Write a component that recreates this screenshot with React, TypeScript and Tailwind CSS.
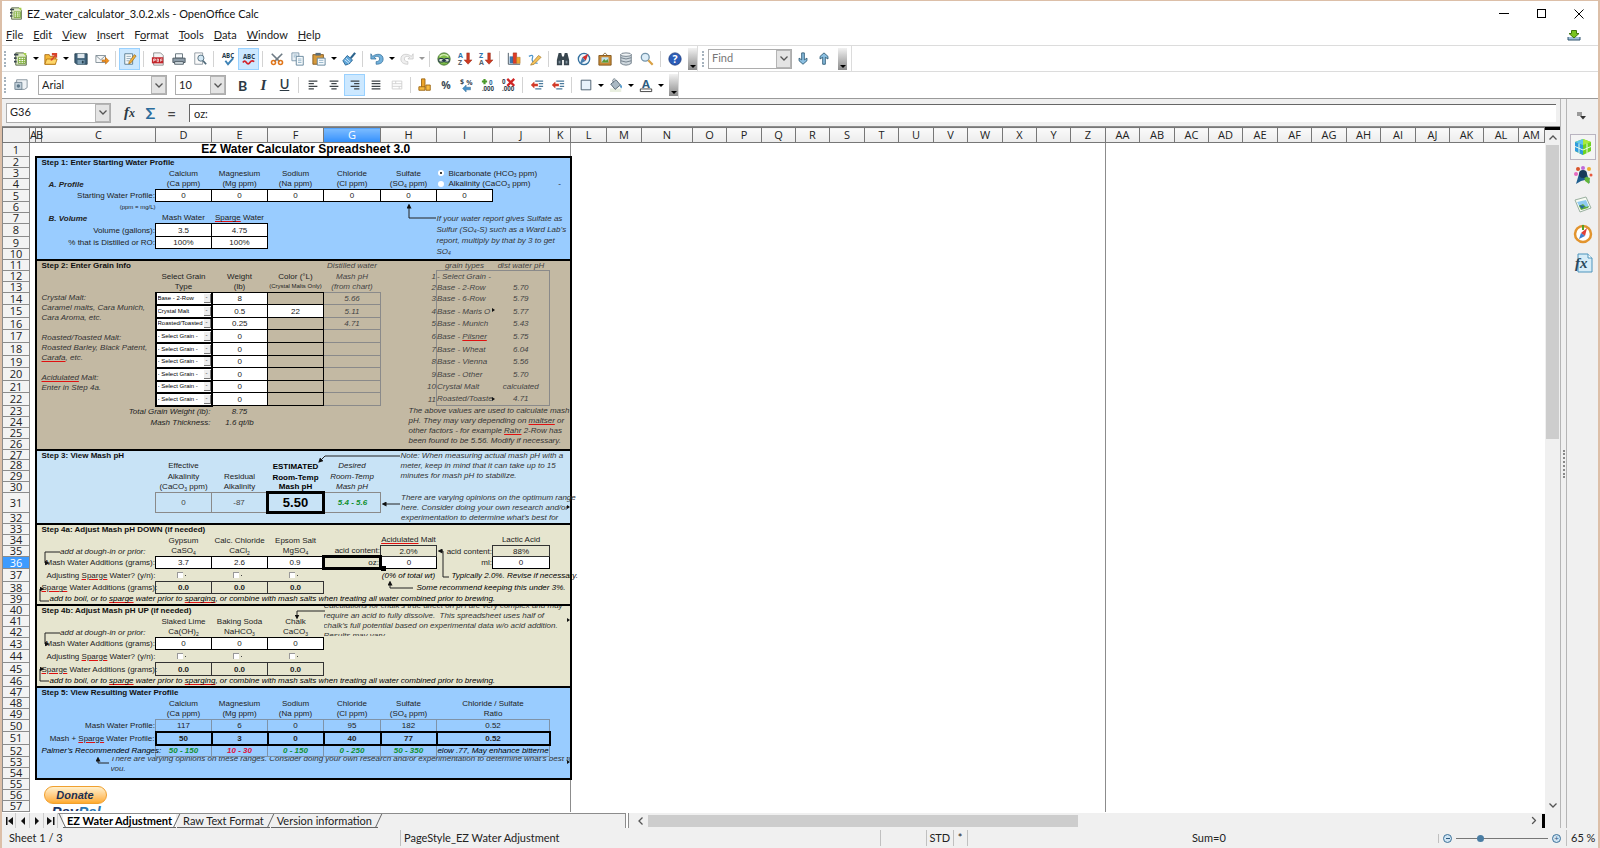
import type { ReactNode } from 'react';
import { clsx } from 'clsx';

/* ------------------------------------------------------------------ */
/* Toolbar icons                                                       */
/* ------------------------------------------------------------------ */

const ICONS: Record<string, ReactNode> = {
  calc: (
    <>
      <path d="M2 1h9l3 3v11H2z" fill="#dfeac6" stroke="#4c5d3a" />
      <path d="M0 2h5v2H0zM0 6h3v2H0zM0 10h3v2H0z" fill="#3a4650" />
      <path d="M5 6h8v7H5z" fill="#fff" stroke="#6c9a2c" />
      <path d="M5 8.500h8M5 11h8M8 6v7M11 6v7" stroke="#7fb135" />
      <path d="M10 1h4v4z" fill="#a5cf4c" />
    </>
  ),
  open: (
    <>
      <path d="M1 3h5l1 2h6v9H1z" fill="#f5b93a" stroke="#a86a12" />
      <path d="M3 8h12l-2 6H1z" fill="#ffd76a" stroke="#b77a18" />
      <path d="M7 9l5-5H9V1h6v6l-2-2-4 5z" fill="#d8432b" />
    </>
  ),
  save: (
    <>
      <path d="M1 2h14v12H3l-2-2z" fill="#3f6079" stroke="#26404f" />
      <path d="M4 2h8v5H4z" fill="#dfe8ee" />
      <path d="M4 9h8v5H4z" fill="#7fa0b5" />
      <path d="M9 10h2v3H9z" fill="#26404f" />
    </>
  ),
  mail: (
    <>
      <path d="M1 4h11v8H1z" fill="#f4f6f7" stroke="#7d8a94" />
      <path d="M1 4l5.500 5L12 4" fill="none" stroke="#7d8a94" />
      <path d="M8 9h4V6l4 4-4 4v-3H8z" fill="#ef8f1e" stroke="#b5630c" strokeWidth=".6" />
    </>
  ),
  edit: (
    <>
      <path d="M2 2h9v12H2z" fill="#f6fafc" stroke="#54768c" />
      <path d="M4 5h5M4 7.500h5M4 10h3" stroke="#8ba5b5" />
      <path d="M7 11l6-8 2 1.500-6 8-2.500 1z" fill="#f3b23a" stroke="#8c5d12" strokeWidth=".7" />
    </>
  ),
  pdf: (
    <>
      <path d="M3 1h8l3 3v11H3z" fill="#f3f3f3" stroke="#888" />
      <path d="M1 6h13v7H1z" fill="#c3252b" />
      <path d="M3 11V8h2v1.500H3M7 8v3h1.500V8zM11 11V8h2M11 9.500h2" fill="none" stroke="#fff" strokeWidth=".8" />
    </>
  ),
  print: (
    <>
      <path d="M4 2h8v5H4z" fill="#f7fafc" stroke="#5c6a74" />
      <path d="M1 7h14v5H1z" fill="#8d9ca8" stroke="#46535d" />
      <path d="M3 11h10v3H3z" fill="#dbe3e8" stroke="#46535d" />
    </>
  ),
  preview: (
    <>
      <path d="M2 1h9v13H2z" fill="#fafafa" stroke="#8c969e" />
      <circle cx="9" cy="7" r="3.500" fill="#d3e8f5" stroke="#4d6878" />
      <path d="M11.500 10l3.500 4" stroke="#4d6878" strokeWidth="2" />
    </>
  ),
  spell: (
    <>
      <text x="8" y="7" fontSize="7" fontWeight="700" textAnchor="middle" fill="#24394a">ABC</text>
      <path d="M5 10l3 4 6-7" fill="none" stroke="#3d82b5" strokeWidth="2.200" />
    </>
  ),
  autospell: (
    <>
      <text x="8" y="8" fontSize="7" fontWeight="700" textAnchor="middle" fill="#24394a">ABC</text>
      <path d="M1 12q2-3 4 0t4 0 5-1" fill="none" stroke="#d3222a" strokeWidth="2" />
    </>
  ),
  cut: (
    <>
      <path d="M2 2l9 9M14 2l-9 9" stroke="#6d7a84" strokeWidth="1.800" />
      <circle cx="4" cy="12" r="2.300" fill="none" stroke="#e0761b" strokeWidth="1.800" />
      <circle cx="12" cy="12" r="2.300" fill="none" stroke="#e0761b" strokeWidth="1.800" />
    </>
  ),
  copy: (
    <>
      <path d="M1 1h8v9H1z" fill="#eaf1f6" stroke="#7a96a9" />
      <path d="M6 5h8v10H6z" fill="#f8fbfd" stroke="#5d7f96" />
      <path d="M3 3.500h4M3 5.500h2M8 8h4M8 10h4M8 12h4" stroke="#8fb0c6" />
    </>
  ),
  paste: (
    <>
      <path d="M1 3h12v11H1z" fill="#d69a3c" stroke="#80551a" />
      <path d="M4 1h6v3H4z" fill="#5b6d79" />
      <path d="M6 7h9v8H6z" fill="#f4f9fc" stroke="#5d7f96" />
      <path d="M8 9.500h5M8 12h5" stroke="#8fb0c6" />
    </>
  ),
  brush: (
    <>
      <path d="M15 1l-5 6" stroke="#2c638c" strokeWidth="2.500" />
      <path d="M6 4l6 5-3 4-5 2-3-5z" fill="#5fa6da" stroke="#28628f" />
      <path d="M3 9l5 4M4.500 7l5 4.500" stroke="#dceefa" />
    </>
  ),
  undo: <path d="M1 2v6h6L5 6c3-2 6-1 6 2 0 2-2 3-4 3v3c5 0 8-2 8-6 0-6-7-7-12-3z" fill="#72b1dc" stroke="#2e6a95" strokeWidth=".8" />,
  redo: <path d="M15 2v6H9l2-2C8 4 5 5 5 8c0 2 2 3 4 3v3c-5 0-8-2-8-6 0-6 7-7 12-3z" fill="#efefef" stroke="#c3c3c3" strokeWidth=".8" />,
  link: (
    <>
      <circle cx="8" cy="8" r="7" fill="#7fbd48" stroke="#3c6b28" />
      <path d="M3 5q5-4 10 0" stroke="#d8efb9" strokeWidth="1.500" fill="none" />
      <rect x="2" y="7.500" width="5.500" height="4" rx="1.500" fill="#dbe8d0" stroke="#23384a" strokeWidth="1.200" />
      <rect x="8.500" y="7.500" width="5.500" height="4" rx="1.500" fill="#dbe8d0" stroke="#23384a" strokeWidth="1.200" />
      <path d="M5.500 9.500h5" stroke="#23384a" strokeWidth="1.400" />
    </>
  ),
  sortAz: (
    <>
      <text x="0" y="7" fontSize="8" fontWeight="700" fill="#2d74ad">A</text>
      <text x="0" y="15" fontSize="8" fontWeight="700" fill="#56636d">Z</text>
      <path d="M10 1h3v8h3l-4.500 5L7 9h3z" fill="#cc3a22" stroke="#8c2413" strokeWidth=".5" />
    </>
  ),
  sortZa: (
    <>
      <text x="0" y="7" fontSize="8" fontWeight="700" fill="#2d74ad">Z</text>
      <text x="0" y="15" fontSize="8" fontWeight="700" fill="#56636d">A</text>
      <path d="M10 1h3v8h3l-4.500 5L7 9h3z" fill="#cc3a22" stroke="#8c2413" strokeWidth=".5" />
    </>
  ),
  chart: (
    <>
      <path d="M1.500 1v13H15" fill="none" stroke="#3b4c58" />
      <path d="M3 5h4v8H3z" fill="#3a77b0" />
      <path d="M7 1h4v12H7z" fill="#df3c24" stroke="#8f2010" strokeWidth=".5" />
      <path d="M11 6h4v7h-4z" fill="#f0a830" stroke="#99641a" strokeWidth=".5" />
    </>
  ),
  pencil: (
    <>
      <path d="M1 5q6-3 4 2t6 6" fill="none" stroke="#4f96cd" strokeWidth="1.500" />
      <path d="M4 13l8-9 3 2-8 8-4 1z" fill="#f4c25a" stroke="#966a1a" strokeWidth=".7" />
    </>
  ),
  binoculars: (
    <>
      <path d="M3 1h3l1 4h2l1-4h3l2 8v6H9V9H7v6H1V9z" fill="#38464f" />
      <path d="M3 10h2v3H3zM11 10h2v3h-2z" fill="#7f909c" />
    </>
  ),
  compass: (
    <>
      <circle cx="8" cy="8" r="6.500" fill="#eef5fa" stroke="#33709f" strokeWidth="1.500" />
      <path d="M13 2L10 10 6 6z" fill="#d22d2d" />
      <path d="M3 14l3-8 4 4z" fill="#4a7fae" />
    </>
  ),
  gallery: (
    <>
      <path d="M5 4l3-3 3 3" fill="none" stroke="#8a6a35" />
      <path d="M1 4h14v11H1z" fill="#c98a36" stroke="#7e5218" />
      <path d="M4 6h8v6H4z" fill="#bfe0ef" />
      <path d="M4 12l3-4 2 2 2-2 1 4z" fill="#5a9a35" />
    </>
  ),
  database: (
    <>
      <path d="M2 3v10q6 4 12 0V3z" fill="#cfd8de" stroke="#6a7883" />
      <ellipse cx="8" cy="3" rx="6" ry="2" fill="#eef2f4" stroke="#6a7883" />
      <path d="M2 6.500q6 3 12 0M2 10q6 3 12 0" fill="none" stroke="#6a7883" />
    </>
  ),
  zoom: (
    <>
      <circle cx="6" cy="6" r="4.500" fill="#dcedf8" stroke="#7494aa" strokeWidth="1.500" />
      <path d="M9.500 9.500l5 5" stroke="#d9a044" strokeWidth="2.500" />
    </>
  ),
  help: (
    <>
      <circle cx="8" cy="8" r="7" fill="#2b5cb8" stroke="#1b3c80" />
      <text x="8" y="12.500" fontSize="12" fontWeight="700" textAnchor="middle" fill="#fff">?</text>
    </>
  ),
  down: <path d="M6.500 1h3v8l3-2v3L8 14 3.500 10V7l3 2z" fill="#8cc0e2" stroke="#2a5873" />,
  up: <path d="M6.500 14h3V6l3 2V5L8 1 3.500 5v3l3-2z" fill="#8cc0e2" stroke="#2a5873" />,
  styles: (
    <>
      <path d="M3 2h12v9l-3 2H3z" fill="#eef2f5" stroke="#7f8d98" />
      <path d="M1 5h8v8H1z" fill="#c2d0da" stroke="#6b7f8e" />
      <circle cx="5" cy="9" r="2" fill="#5e788a" />
    </>
  ),
  alignLeft: <path d="M3 3.500h10M3 6.500h6M3 9.500h10M3 12.500h6" stroke="#3d4347" strokeWidth="1.300" />,
  alignCenter: <path d="M3 3.500h10M5 6.500h6M3 9.500h10M5 12.500h6" stroke="#3d4347" strokeWidth="1.300" />,
  alignRight: <path d="M3 3.500h10M7 6.500h6M3 9.500h10M7 12.500h6" stroke="#3d4347" strokeWidth="1.300" />,
  justify: <path d="M3 3.500h10M3 6.500h10M3 9.500h10M3 12.500h10" stroke="#3d4347" strokeWidth="1.300" />,
  merge: <path d="M2.500 3.500h11v9h-11zM2.500 6.500h11M2.500 9.500h11M6.500 3.500v3M10.500 9.500v3" fill="none" stroke="#cfcfcf" />,
  currency: (
    <>
      <path d="M4 1h4v10H4z" fill="#eda52a" stroke="#9a6410" />
      <path d="M1 10h7v4H1zM9 8h5v6H9z" fill="#f6b93e" stroke="#9a6410" />
    </>
  ),
  percent: <text x="8" y="12" fontSize="12" fontWeight="700" textAnchor="middle" fill="#3b4a55">%</text>,
  standard: (
    <>
      <text x="0" y="7" fontSize="8" fontWeight="700" fill="#3b4a55">$</text>
      <text x="7" y="8" fontSize="8" fontWeight="700" fill="#3b4a55">%</text>
      <path d="M3 12l4-4v2.500h5v3H7V16z" fill="#4590c8" stroke="#28628f" strokeWidth=".5" />
    </>
  ),
  addDecimal: (
    <>
      <path d="M4 1v6M1 4h6" stroke="#4c9a2a" strokeWidth="2.500" />
      <text x="9" y="8" fontSize="7" fontWeight="700" fill="#2f6a9c">0</text>
      <text x="1" y="15" fontSize="7" fontWeight="700" fill="#33424d">.000</text>
    </>
  ),
  delDecimal: (
    <>
      <text x="0" y="7" fontSize="7" fontWeight="700" fill="#33424d">0</text>
      <text x="0" y="15" fontSize="7" fontWeight="700" fill="#33424d">.000</text>
      <path d="M6 1l8 8M14 1l-8 8" stroke="#cf2525" strokeWidth="2.500" />
    </>
  ),
  indent: (
    <>
      <path d="M6 3.500h9M10 6.500h5M10 9.500h5M6 12.500h7" stroke="#4a7a9c" strokeWidth="1.300" />
      <path d="M1 8l4-4v2.500h4v3H5V12z" fill="#d23a28" />
    </>
  ),
  border: <path d="M2.500 2.500h11v11h-11z" fill="#e8f1fa" stroke="#3e5264" />,
  bucket: (
    <>
      <path d="M1 12h13v4H1z" fill="#e9efe0" />
      <path d="M2 7l6-5 5 6-6 5z" fill="#aab9c3" stroke="#50626f" />
      <path d="M13 7q3 2 1 5-2-2-1-5z" fill="#3a8cc8" />
      <path d="M5 5q-2-4 2-4" fill="none" stroke="#50626f" />
    </>
  ),
  fontColor: (
    <>
      <text x="8" y="11" fontSize="13" fontWeight="700" textAnchor="middle" fill="#2c5c80">A</text>
      <path d="M1.500 12.500h13v3h-13z" fill="#fff" stroke="#333" />
    </>
  ),
};

function Icon({ name, size = 16 }: { name: string; size?: number }) {
  return (
    <svg width={size} height={size} viewBox="0 0 16 16" aria-hidden="true" className="shrink-0 overflow-visible font-['Open_Sans',sans-serif]">
      {ICONS[name]}
    </svg>
  );
}

function Tool({ name, label, active = false, children }: { name?: string; label: string; active?: boolean; children?: ReactNode }) {
  return (
    <button
      type="button"
      aria-label={label}
      className={clsx('flex h-[22px] w-[21px] shrink-0 items-center justify-center', active && 'border border-[#99d1ff] bg-[#cce8ff]')}
    >
      {name ? <Icon name={name} size={14} /> : children}
    </button>
  );
}

function Caret({ dim = false }: { dim?: boolean }) {
  return (
    <button type="button" aria-label="More" className="flex h-[22px] w-[9px] shrink-0 items-center justify-center">
      <span className={clsx('border-x-[3px] border-t-[3px] border-x-transparent', dim ? 'border-t-[#999]' : 'border-t-black')} />
    </button>
  );
}

const Sep = () => <span className="mx-[3px] h-4 w-px shrink-0 bg-[#d3d3d3]" />;
const Grip = () => <span className="h-4 w-0 shrink-0 border-l-2 border-dotted border-[#a5b2bd]" />;

function Overflow() {
  return (
    <button type="button" aria-label="Toolbar options" className="flex h-[22px] w-[9px] shrink-0 items-end justify-center bg-linear-to-b from-[#f2f2f2] to-[#8c8c8c] pb-[2px]">
      <span className="border-x-[3px] border-t-[3px] border-x-transparent border-t-black" />
    </button>
  );
}

function Chevron() {
  return (
    <svg width="8" height="5" viewBox="0 0 8 5" aria-hidden="true">
      <path d="M.5.5L4 4 7.500.5" fill="none" stroke="#555" strokeWidth="1.300" />
    </svg>
  );
}

function Combo({ label, value, className, placeholder }: { label: string; value?: string; placeholder?: string; className: string }) {
  return (
    <div className={clsx('flex h-5 shrink-0 border border-[#adadad] bg-white', className)}>
      <input aria-label={label} defaultValue={value} placeholder={placeholder} className="w-0 min-w-0 flex-1 px-[3px] text-[11px] text-[#222] outline-none placeholder:text-[#777]" />
      <button type="button" aria-label={`${label} list`} className="flex w-[15px] items-center justify-center border border-[#b5b5b5] bg-[#e4e4e4]">
        <Chevron />
      </button>
    </div>
  );
}

/* ------------------------------------------------------------------ */
/* Sheet data                                                          */
/* ------------------------------------------------------------------ */

const LETTERS = 'ABCDEFGHIJK'.split('');

const COLUMNS: [string, number][] = [
  ['A', 6], ['B', 6], ['C', 114], ['D', 56], ['E', 56], ['F', 56], ['G', 57], ['H', 56], ['I', 56], ['J', 57], ['K', 21],
  ['L', 36], ['M', 35], ['N', 51], ['O', 34], ['P', 35], ['Q', 34], ['R', 34], ['S', 35], ['T', 34], ['U', 35], ['V', 34],
  ['W', 35], ['X', 34], ['Y', 34], ['Z', 35], ['AA', 34], ['AB', 35], ['AC', 34], ['AD', 34], ['AE', 35], ['AF', 34],
  ['AG', 35], ['AH', 34], ['AI', 35], ['AJ', 34], ['AK', 34], ['AL', 35],
];

const ROW_HEIGHTS = [
  14, 11, 11, 11, 12, 11, 11, 13, 12, 11, 11, 11, 11, 12, 13, 12, 13, 13, 12, 13, 12, 13, 11, 11, 11, 11, 10, 11, 11, 11,
  20, 11, 11, 11, 11, 12, 13, 12, 11, 11, 11, 11, 12, 13, 13, 11, 11, 11, 11, 12, 13, 12, 11, 11, 11, 11, 11,
];

const SECTIONS = [
  { from: 2, to: 10, bg: 'bg-[#99ccff]' },
  { from: 11, to: 26, bg: 'bg-[#c3b9a3]' },
  { from: 27, to: 32, bg: 'bg-[#c8e3f6]' },
  { from: 33, to: 39, bg: 'bg-[#e6e5cf]' },
  { from: 40, to: 46, bg: 'bg-[#e6e5cf]' },
  { from: 47, to: 54, bg: 'bg-[#99ccff]' },
];

interface CellData {
  text: ReactNode;
  className?: string;
  cols?: number;
  rows?: number;
}

const LEFT = 'text-left';
const RIGHT = 'text-right';
const HEAD = 'text-left font-bold text-[#111]';
const BOX = 'border border-black bg-white';
const BOX_PLAIN = 'border border-[#333]';
const GRAY_BOX = 'border border-[#8a8a8a] text-[#444]';
const NOTE = 'text-left italic align-top whitespace-pre text-[#333]';

const Typo = ({ children }: { children: ReactNode }) => (
  <span className="underline decoration-[#e01010] decoration-1 underline-offset-1">{children}</span>
);

const cells: Record<string, CellData> = {};

function put(ref: string, text: ReactNode, className = '', cols = 1, rows = 1) {
  cells[ref] = { text, className, cols, rows };
}

function putRow(row: number, from: string, values: ReactNode[], className = '') {
  const start = LETTERS.indexOf(from);
  values.forEach((value, i) => put(`${LETTERS[start + i]}${row}`, value, className));
}

put('C1', 'EZ Water Calculator Spreadsheet 3.0', 'font-bold text-[12px] leading-[12px] text-black', 9);

// Step 1
put('C2', 'Step 1: Enter Starting Water Profile', HEAD);
putRow(3, 'D', ['Calcium', 'Magnesium', 'Sodium', 'Chloride', 'Sulfate']);
putRow(4, 'D', ['(Ca ppm)', '(Mg ppm)', '(Na ppm)', '(Cl ppm)', <>(SO<sub>4</sub> ppm)</>]);
put('I3', <SheetRadio label={<>Bicarbonate (HCO<sub>3</sub> ppm)</>} checked />, LEFT, 2);
put('I4', <SheetRadio label={<>Alkalinity (CaCO<sub>3</sub> ppm)</>} />, LEFT, 2);
put('K4', '-', 'align-top');
put('C4', 'A. Profile', 'text-left font-bold italic pl-[7px]');
put('C5', 'Starting Water Profile:', RIGHT);
putRow(5, 'D', ['0', '0', '0', '0', '0', '0'], BOX);
put('C6', '(ppm = mg/L)', 'text-right text-[6px]');
put('C7', 'B. Volume', 'text-left font-bold italic pl-[7px]');
putRow(7, 'D', ['Mash Water', <><Typo>Sparge</Typo> Water</>]);
put('I7', <>{'If your water report gives Sulfate as\nSulfur (SO'}<sub>4</sub>{'-S) such as a Ward Lab’s\nreport, multiply by that by 3 to get\nSO'}<sub>4</sub></>, clsx(NOTE, 'leading-[11px]'), 3, 4);
put('C8', 'Volume (gallons):', RIGHT);
putRow(8, 'D', ['3.5', '4.75'], BOX);
put('C9', '% that is Distilled or RO:', RIGHT);
putRow(9, 'D', ['100%', '100%'], BOX);

// Step 2
put('C11', 'Step 2: Enter Grain Info', HEAD);
put('G11', 'Distilled water', 'italic text-[#444]');
put('I11', 'grain types', 'italic text-[#444]');
put('J11', 'dist water pH', 'italic text-[#444]');
putRow(12, 'D', ['Select Grain', 'Weight', 'Color (°L)']);
put('G12', 'Mash pH', 'italic text-[#444]');
putRow(13, 'D', ['Type', '(lb)']);
put('F13', '(Crystal Malts Only)', 'text-[6px]');
put('G13', '(from chart)', 'italic text-[#444]');
put(
  'C14',
  <>
    {'Crystal Malt:\nCaramel malts, Cara Munich,\nCara Aroma, etc.\n\nRoasted/Toasted Malt:\nRoasted Barley, Black Patent,\n'}
    <Typo>Carafa</Typo>
    {', etc.\n\n'}
    <Typo>Acidulated</Typo>
    {' Malt:\nEnter in Step 4a.'}
  </>,
  clsx(NOTE, 'leading-[10px]'),
  1,
  9
);

const GRAIN_ROWS = ['Base - 2-Row', 'Crystal Malt', 'Roasted/Toasted', ...Array(6).fill('- Select Grain -')];
const WEIGHTS = ['8', '0.5', '0.25', '0', '0', '0', '0', '0', '0'];
const MASH_PH = ['5.66', '5.11', '4.71', '', '', '', '', '', ''];
GRAIN_ROWS.forEach((grain, i) => {
  const row = 14 + i;
  put(`D${row}`, <GrainSelect value={grain} row={row} />, 'border border-black border-l-2 border-r-2 border-b-2 bg-white');
  put(`E${row}`, WEIGHTS[i], BOX);
  put(`F${row}`, row === 15 ? '22' : '', row === 15 ? BOX : 'border border-black');
  put(`G${row}`, MASH_PH[i], clsx(GRAY_BOX, 'italic'));
});

const GRAIN_TYPES: [ReactNode, string][] = [
  ['- Select Grain -', ''],
  ['Base - 2-Row', '5.70'],
  ['Base - 6-Row', '5.79'],
  ['Base - Maris O', '5.77'],
  ['Base - Munich', '5.43'],
  [<>Base - <Typo>Pilsner</Typo></>, '5.75'],
  ['Base - Wheat', '6.04'],
  ['Base - Vienna', '5.56'],
  ['Base - Other', '5.70'],
  ['Crystal Malt', 'calculated'],
  ['Roasted/Toaste', '4.71'],
];
GRAIN_TYPES.forEach(([name, ph], i) => {
  const row = 12 + i;
  const edge = clsx('border-[#8a8a8a] italic text-[#444]', i === 0 && 'border-t', i === 10 && 'border-b');
  put(`H${row}`, String(i + 1), 'text-right italic text-[#444]');
  put(`I${row}`, name, clsx(edge, 'border-l text-left'));
  put(`J${row}`, ph, clsx(edge, 'border-r'));
});
put('C23', 'Total Grain Weight (lb):', 'text-right italic pr-px', 2);
put('E23', '8.75', 'italic');
put('C24', 'Mash Thickness:', 'text-right italic pr-px', 2);
put('E24', '1.6 qt/lb', 'italic');
put(
  'H23',
  <>
    {'The above values are used to calculate mash\npH. They may vary depending on '}
    <Typo>maltser</Typo>
    {' or\nother factors - for example '}
    <Typo>Rahr</Typo>
    {' 2-Row has\nbeen found to be 5.56. Modify if necessary.'}
  </>,
  clsx(NOTE, 'pl-7 leading-[10px]'),
  4,
  4
);

// Step 3
put('C27', 'Step 3: View Mash pH', HEAD);
put('H27', 'Note: When measuring actual mash pH with a\nmeter, keep in mind that it can take up to 15\nminutes for mash pH to stabilize.', clsx(NOTE, 'pl-5 leading-[10px]'), 4, 4);
put('D28', 'Effective');
put('D29', 'Alkalinity');
put('D30', <>(CaCO<sub>3</sub> ppm)</>);
put('E29', 'Residual');
put('E30', 'Alkalinity');
put('F28', 'ESTIMATED', 'font-bold text-black align-bottom');
put('F29', 'Room-Temp', 'font-bold text-black align-bottom');
put('F30', 'Mash pH', 'font-bold text-black align-bottom');
put('G28', 'Desired', 'italic');
put('G29', 'Room-Temp', 'italic');
put('G30', 'Mash pH', 'italic');
put('D31', '0', GRAY_BOX);
put('E31', '-87', GRAY_BOX);
put('F31', '5.50', 'border-[3px] border-black text-[13px] leading-[14px] font-bold text-black');
put('G31', '5.4 - 5.6', 'border border-[#8a8a8a] font-bold italic text-[#109030]');
put('H31', 'There are varying opinions on the optimum range\nhere. Consider doing your own research and/or\nexperimentation to determine what’s best for', clsx(NOTE, 'pl-5 leading-[10px]'), 4, 2);

// Steps 4a and 4b share the same row pattern
function additions(row: number, formulas: ReactNode[], grams: string[]) {
  put(`C${row}`, 'add at dough-in or prior:', 'text-right italic pr-[10px]');
  putRow(row, 'D', formulas);
  put(`C${row + 1}`, 'Mash Water Additions (grams):', RIGHT);
  putRow(row + 1, 'D', grams, BOX);
  put(`C${row + 2}`, <>Adjusting <Typo>Sparge</Typo> Water? (y/n):</>, RIGHT);
  putRow(row + 2, 'D', ['D', 'E', 'F'].map((col) => <SheetCheck key={col} label={`Adjust sparge water ${col}${row + 2}`} />));
  put(`C${row + 3}`, <><Typo>Sparge</Typo> Water Additions (grams):</>, RIGHT);
  putRow(row + 3, 'D', ['0.0', '0.0', '0.0'], clsx(BOX_PLAIN, 'font-bold'));
  put(
    `C${row + 4}`,
    <>add to boil, or to <Typo>sparge</Typo> water prior to <Typo>sparging</Typo>, or combine with mash salts when treating all water combined prior to brewing.</>,
    'text-left italic pl-2 text-black',
    9
  );
}

put('C33', 'Step 4a: Adjust Mash pH DOWN (if needed)', HEAD);
putRow(34, 'D', ['Gypsum', 'Calc. Chloride', 'Epsom Salt']);
put('H34', <><Typo>Acidulated</Typo> Malt</>);
put('J34', 'Lactic Acid');
additions(35, [<>CaSO<sub>4</sub></>, <>CaCl<sub>2</sub></>, <>MgSO<sub>4</sub></>], ['3.7', '2.6', '0.9']);
put('G35', 'acid content:', RIGHT);
put('H35', '2.0%', BOX_PLAIN);
put('I35', 'acid content:', RIGHT);
put('J35', '88%', BOX_PLAIN);
put('G36', 'oz:', 'border-[3px] border-black text-right');
put('H36', '0', BOX);
put('I36', 'ml:', RIGHT);
put('J36', '0', BOX);
put('H37', '(0% of total wt)', 'italic text-black');
put('I37', 'Typically 2.0%. Revise if necessary.', 'text-left italic pl-[15px] text-black', 3);
put('H38', 'Some recommend keeping this under 3%.', 'text-left italic pl-9 text-black', 4);

put('C40', 'Step 4b: Adjust Mash pH UP (if needed)', HEAD);
putRow(41, 'D', ['Slaked Lime', 'Baking Soda', 'Chalk']);
additions(42, [<>Ca(OH)<sub>2</sub></>, <>NaHCO<sub>3</sub></>, <>CaCO<sub>3</sub></>], ['0', '0', '0']);
put(
  'G40',
  <div className="flex h-[30px] items-center overflow-hidden">
    {'Calculations for chalk’s true affect on pH are very complex and may\nrequire an acid to fully dissolve.  This spreadsheet uses half of\nchalk’s full potential based on experimental data w/o acid addition.\nResults may vary.'}
  </div>,
  clsx(NOTE, 'leading-[10px]'),
  5,
  3
);

// Step 5
put('C47', 'Step 5: View Resulting Water Profile', HEAD);
putRow(48, 'D', ['Calcium', 'Magnesium', 'Sodium', 'Chloride', 'Sulfate']);
put('I48', 'Chloride / Sulfate', '', 2);
putRow(49, 'D', ['(Ca ppm)', '(Mg ppm)', '(Na ppm)', '(Cl ppm)', <>(SO<sub>4</sub> ppm)</>]);
put('I49', 'Ratio', '', 2);
put('C50', 'Mash Water Profile:', RIGHT);
putRow(50, 'D', ['117', '6', '0', '95', '182'], 'border border-[#7f93a8]');
put('I50', '0.52', 'border border-[#7f93a8]', 2);
put('C51', <>Mash + <Typo>Sparge</Typo> Water Profile:</>, RIGHT);
putRow(51, 'D', ['50', '3', '0', '40', '77'], 'border-2 border-black font-bold');
put('I51', '0.52', 'border-2 border-black font-bold', 2);
put('C52', 'Palmer’s Recommended Ranges:', 'text-right italic text-black');
putRow(52, 'D', ['50 - 150', '10 - 30', '0 - 150', '0 - 250', '50 - 350'], 'border border-[#7f93a8] font-bold italic text-[#109030]');
cells.E52.className = 'border border-[#7f93a8] font-bold italic text-[#e01040]';
put('I52', <div className="flex justify-center overflow-hidden">elow .77, May enhance bitterne</div>, 'border border-[#7f93a8] italic text-black', 2);
put(
  'C53',
  <div className="flex h-[14px] items-center overflow-hidden">
    {'There are varying opinions on these ranges. Consider doing your own research and/or experimentation to determine what’s best for\nyou.'}
  </div>,
  clsx(NOTE, 'pl-[69px] leading-[10px]'),
  9,
  2
);
put('C55', <DonateButton />, 'text-left align-top', 3, 3);

function SheetRadio({ label, checked = false }: { label: ReactNode; checked?: boolean }) {
  return (
    <label className="flex h-[9px] items-center gap-[5px] pl-px">
      <input type="radio" name="alkalinity" defaultChecked={checked} className="size-[6px] appearance-none rounded-full border-2 border-white bg-white checked:bg-black" />
      <span>{label}</span>
    </label>
  );
}

function SheetCheck({ label }: { label: string }) {
  return (
    <span className="flex h-[9px] items-center justify-center gap-[2px] pr-1">
      <input type="checkbox" aria-label={label} className="size-[6px] appearance-none border-t border-l border-[#999] bg-white" />
      <span className="size-px bg-[#444]" />
    </span>
  );
}

function GrainSelect({ value, row }: { value: string; row: number }) {
  return (
    <span className="flex h-[9px] items-center">
      <select aria-label={`Grain type, row ${row}`} className="h-[9px] w-0 min-w-0 flex-1 appearance-none pl-px text-[6px] leading-[9px] text-black">
        <option>{value}</option>
      </select>
      <span className="h-[9px] w-[7px] border-r border-b border-[#777] bg-[#eee] text-[6px] leading-[7px]">-</span>
    </span>
  );
}

function DonateButton() {
  return (
    <div className="flex h-[31px] flex-col overflow-hidden pt-[6px]">
      <button
        type="button"
        className="ml-[2px] h-[18px] w-[63px] shrink-0 rounded-full border border-[#f0a030] bg-linear-to-b from-[#fff0cc] to-[#ffab28] text-[11px] leading-[16px] font-bold italic text-[#1c2f50]"
      >
        Donate
      </button>
      <span className="ml-[10px] text-[15px] leading-[15px] font-bold italic text-[#1c3668]">
        Pay<span className="text-[#2a76b4]">Pal</span>
      </span>
    </div>
  );
}

/* ------------------------------------------------------------------ */
/* Sheet                                                               */
/* ------------------------------------------------------------------ */

function covered() {
  const set = new Set<string>();
  Object.entries(cells).forEach(([ref, cell]) => {
    const col = LETTERS.indexOf(ref[0]);
    const row = Number(ref.slice(1));
    for (let r = 0; r < (cell.rows ?? 1); r++) {
      for (let c = 0; c < (cell.cols ?? 1); c++) {
        if (r || c) set.add(`${LETTERS[col + c]}${row + r}`);
      }
    }
  });
  return set;
}

const HIDDEN = covered();

function SheetRow({ row, height }: { row: number; height: number }) {
  const section = SECTIONS.find((s) => row >= s.from && row <= s.to);
  return (
    <tr style={{ height }}>
      <th
        scope="row"
        className={clsx(
          'border border-[#8c8c8c] p-0 text-[11px] leading-[8px] font-normal',
          row === 36 ? 'bg-[#3d9bff] font-bold text-white' : 'bg-[#f3f3f3] text-[#222]'
        )}
      >
        {row}
      </th>
      {LETTERS.map((letter, i) => {
        const ref = `${letter}${row}`;
        if (HIDDEN.has(ref)) return null;
        const cell = cells[ref];
        const last = LETTERS[i + (cell?.cols ?? 1) - 1];
        const boxed = section && letter !== 'A';
        return (
          <td
            key={ref}
            colSpan={cell?.cols ?? 1}
            rowSpan={cell?.rows ?? 1}
            className={clsx(
              'p-0 whitespace-nowrap',
              !cell?.className?.includes('leading-') && 'leading-[9px]',
              !cell?.className?.includes('text-left') && !cell?.className?.includes('text-right') && 'text-center',
              boxed && !cell?.className?.includes('bg-white') && section.bg,
              boxed && row === section.from && 'border-t-2 border-t-black',
              boxed && row + (cell?.rows ?? 1) - 1 === section.to && 'border-b-2 border-b-black',
              boxed && letter === 'B' && 'border-l-2 border-l-black',
              boxed && last === 'K' && 'border-r-2 border-r-black',
              !section && last === 'K' && 'border-r border-r-[#8c8c8c]',
              cell?.className
            )}
          >
            {cell?.text}
          </td>
        );
      })}
      <td colSpan={15} className="border-r border-[#8c8c8c] p-0" />
      <td colSpan={13} className="p-0" />
    </tr>
  );
}

// Arrows that are drawn on top of the cells
const ARROWS = [
  'M434 91H407V79',
  'M398 329H323L318 334',
  'M398 377H382',
  'M58 425H43V436H45',
  'M47 474H38V462H40',
  'M447 450H441V424H438',
  'M411 461H388V456',
  'M323 484H295V490',
  'M58 506H43V517H45',
  'M47 554H38V542H40',
  'M107 636H96V632',
];

function Arrows() {
  return (
    <svg width="600" height="690" viewBox="0 0 600 690" aria-hidden="true" className="pointer-events-none absolute top-0 left-0">
      <defs>
        <marker id="head" viewBox="0 0 6 6" refX="3" refY="3" markerWidth="5" markerHeight="5" orient="auto">
          <path d="M0 0L6 3 0 6z" fill="#111" />
        </marker>
      </defs>
      {ARROWS.map((d) => (
        <path key={d} d={d} fill="none" stroke="#222" markerEnd="url(#head)" />
      ))}
      <path d="M490 181l3 2-3 2zM490 270l3 2-3 2zM565 378l3 2-3 2zM565 491l3 2-3 2zM565 633l3 2-3 2z" fill="#111" />
      <path d="M379 439h5v5h-5z" fill="#000" />
    </svg>
  );
}

function Sheet() {
  return (
    <div className="relative min-h-0 flex-1 overflow-hidden bg-white">
      <table className="w-full table-fixed border-collapse font-['Liberation_Sans',Arial,sans-serif] text-[8px] text-[#222] [&_sub]:text-[5px]">
        <colgroup>
          <col className="w-[27px]" />
          {COLUMNS.map(([name, width]) => (
            <col key={name} style={{ width }} />
          ))}
          <col />
        </colgroup>
        <thead className="font-['Open_Sans',sans-serif]">
          <tr className="h-[15px]">
            <th className="border border-[#777] bg-[#f0f0f0] p-0" />
            {[...COLUMNS.map(([name]) => name), 'AM'].map((name) => (
              <th
                key={name}
                scope="col"
                className={clsx(
                  'border border-[#777] p-0 text-[11px] leading-[12px] font-normal',
                  name === 'G' ? 'bg-linear-to-b from-[#7cbcff] to-[#2f8ffc] text-white' : 'bg-linear-to-b from-[#fafafa] to-[#ececec] text-[#222]'
                )}
              >
                {name}
              </th>
            ))}
          </tr>
        </thead>
        <tbody className="[&_th]:font-['Open_Sans',sans-serif]">
          {ROW_HEIGHTS.map((height, i) => (
            <SheetRow key={i} row={i + 1} height={height} />
          ))}
        </tbody>
      </table>
      <Arrows />
    </div>
  );
}

/* ------------------------------------------------------------------ */
/* Window chrome                                                       */
/* ------------------------------------------------------------------ */

function TitleBar() {
  return (
    <header className="flex h-[25px] shrink-0 items-center pl-2">
      <Icon name="calc" size={13} />
      <h1 className="ml-1 flex-1 text-[11px] leading-4 text-[#111]">EZ_water_calculator_3.0.2.xls - OpenOffice Calc</h1>
      <div className="flex items-center gap-7 pr-[14px]">
        <button type="button" aria-label="Minimize" className="flex size-[10px] items-center">
          <span className="h-px w-full bg-black" />
        </button>
        <button type="button" aria-label="Maximize" className="size-[9px] border border-black" />
        <button type="button" aria-label="Close" className="size-[10px]">
          <svg width="10" height="10" viewBox="0 0 10 10" aria-hidden="true">
            <path d="M.5.5l9 9M9.500.5l-9 9" stroke="#000" />
          </svg>
        </button>
      </div>
    </header>
  );
}

const MENUS: [string, string, string][] = [
  ['', 'F', 'ile'], ['', 'E', 'dit'], ['', 'V', 'iew'], ['', 'I', 'nsert'], ['F', 'o', 'rmat'],
  ['', 'T', 'ools'], ['', 'D', 'ata'], ['', 'W', 'indow'], ['', 'H', 'elp'],
];

function MenuBar() {
  return (
    <nav className="flex h-5 shrink-0 items-center gap-[10px] border-b border-[#dcdcdc] pl-1 text-[11px]">
      {MENUS.map(([before, key, after]) => (
        <button key={key} type="button">
          {before}
          <u>{key}</u>
          {after}
        </button>
      ))}
      <button type="button" aria-label="Update available" className="mr-[17px] ml-auto">
        <svg width="14" height="11" viewBox="0 0 14 11" aria-hidden="true">
          <path d="M1 7v3h12V7" fill="#9fc0d8" stroke="#31556e" />
          <path d="M4.500.5h5v3H12L7 8 2 3.500h2.500z" fill="#78c41e" stroke="#40780c" />
        </svg>
      </button>
    </nav>
  );
}

function Toolbars() {
  return (
    <div className="shrink-0 border-b border-[#9a9a9a] bg-white">
      <div className="flex h-[26px] items-center border-b border-[#dcdcdc] pl-[2px]">
        <Grip />
        <span className="w-1" />
        <Tool name="calc" label="New" />
        <Caret />
        <Tool name="open" label="Open" />
        <Caret />
        <Tool name="save" label="Save" />
        <Tool name="mail" label="E-mail" />
        <Sep />
        <Tool name="edit" label="Edit File" active />
        <Sep />
        <Tool name="pdf" label="Export PDF" />
        <Tool name="print" label="Print" />
        <Tool name="preview" label="Page Preview" />
        <Sep />
        <Tool name="spell" label="Spelling" />
        <Tool name="autospell" label="AutoSpellcheck" active />
        <Sep />
        <Tool name="cut" label="Cut" />
        <Tool name="copy" label="Copy" />
        <Tool name="paste" label="Paste" />
        <Caret />
        <Tool name="brush" label="Format Paintbrush" />
        <Sep />
        <Tool name="undo" label="Undo" />
        <Caret />
        <Tool name="redo" label="Redo" />
        <Caret dim />
        <Sep />
        <Tool name="link" label="Hyperlink" />
        <Tool name="sortAz" label="Sort Ascending" />
        <Tool name="sortZa" label="Sort Descending" />
        <Sep />
        <Tool name="chart" label="Chart" />
        <Tool name="pencil" label="Show Draw Functions" />
        <Sep />
        <Tool name="binoculars" label="Find and Replace" />
        <Tool name="compass" label="Navigator" />
        <Tool name="gallery" label="Gallery" />
        <Tool name="database" label="Data Sources" />
        <Tool name="zoom" label="Zoom" />
        <Sep />
        <Tool name="help" label="Help" />
        <span className="w-[3px]" />
        <Overflow />
        <span className="mr-1 h-full w-px bg-[#dcdcdc]" />
        <Grip />
        <Combo label="Find" placeholder="Find" className="ml-1 w-[84px]" />
        <Tool name="down" label="Find Next" />
        <Tool name="up" label="Find Previous" />
        <span className="w-1" />
        <Overflow />
        <span className="ml-1 h-full w-px bg-[#dcdcdc]" />
      </div>
      <div className="flex h-[26px] items-center pl-[2px]">
        <Grip />
        <span className="w-1" />
        <Tool name="styles" label="Styles and Formatting" />
        <Combo label="Font Name" value="Arial" className="ml-[7px] w-[129px]" />
        <Combo label="Font Size" value="10" className="mr-[6px] ml-2 w-[51px]" />
        <Tool label="Bold"><b className="text-[14px] text-[#2d3a44]">B</b></Tool>
        <Tool label="Italic"><i className="font-['Liberation_Serif',serif] text-[15px] font-bold text-[#2d3a44]">I</i></Tool>
        <Tool label="Underline"><u className="text-[13px] font-semibold text-[#2d3a44]">U</u></Tool>
        <Sep />
        <Tool name="alignLeft" label="Align Left" />
        <Tool name="alignCenter" label="Center" />
        <Tool name="alignRight" label="Align Right" active />
        <Tool name="justify" label="Justified" />
        <Tool name="merge" label="Merge Cells" />
        <Sep />
        <Tool name="currency" label="Currency" />
        <Tool name="percent" label="Percent" />
        <Tool name="standard" label="Standard" />
        <Tool name="addDecimal" label="Add Decimal Place" />
        <Tool name="delDecimal" label="Delete Decimal Place" />
        <Sep />
        <Tool name="indent" label="Decrease Indent" />
        <Tool name="indent" label="Increase Indent" />
        <Sep />
        <Tool name="border" label="Borders" />
        <Caret />
        <Tool name="bucket" label="Background Color" />
        <Caret />
        <Tool name="fontColor" label="Font Color" />
        <Caret />
        <span className="w-1" />
        <Overflow />
        <span className="h-full w-px bg-[#dcdcdc]" />
      </div>
    </div>
  );
}

function FormulaBar() {
  return (
    <div className="flex h-7 shrink-0 items-center border-b border-[#8c8c8c] bg-[#f0f0f0] pr-1 pl-1">
      <Combo label="Name Box" value="G36" className="w-[105px]" />
      <button type="button" aria-label="Function Wizard" className="ml-2 w-[21px] font-['Liberation_Serif',serif] text-[15px] leading-4 font-bold italic text-[#2c3a44]">
        f<span className="text-[12px]">x</span>
      </button>
      <button type="button" aria-label="Sum" className="w-[21px] text-[16px] leading-4 font-bold text-[#2b6c9c]">
        Σ
      </button>
      <button type="button" aria-label="Function" className="mr-[7px] w-[21px] text-[15px] leading-4 font-bold text-[#444]">
        =
      </button>
      <input aria-label="Input line" defaultValue="oz:" className="h-[18px] min-w-0 flex-1 border-t border-l border-[#666] bg-white px-1 text-[11px] outline-none" />
    </div>
  );
}

function VerticalScroll() {
  return (
    <div className="flex w-[15px] shrink-0 flex-col items-center bg-[#f0f0f0]">
      <span className="h-[3px] w-full bg-black" />
      <button type="button" aria-label="Scroll up" className="flex h-[15px] shrink-0 rotate-180 items-center justify-center">
        <Chevron />
      </button>
      <div className="flex w-[13px] flex-1 flex-col">
        <span className="h-[45%] bg-[#cdcdcd]" />
      </div>
      <button type="button" aria-label="Scroll down" className="flex h-[15px] shrink-0 items-center justify-center">
        <Chevron />
      </button>
    </div>
  );
}

const NAV_ICONS: [string, string][] = [
  ['First sheet', 'M1 0h1.500v8H1zM8 0v8L3 4z'],
  ['Previous sheet', 'M6 0v8L2 4z'],
  ['Next sheet', 'M2 0v8l4-4z'],
  ['Last sheet', 'M0 0v8l5-4zM6 0h1.500v8H6z'],
];

function TabBar() {
  return (
    <div className="flex h-[15px] shrink-0 items-stretch bg-[#f0f0f0] text-[11px]">
      {NAV_ICONS.map(([label, d]) => (
        <button key={label} type="button" aria-label={label} className="flex w-[14px] items-center justify-center border-r border-[#ccc]">
          <svg width="8" height="8" viewBox="0 0 8 8" aria-hidden="true">
            <path d={d} fill="#111" />
          </svg>
        </button>
      ))}
      <div role="tablist" className="flex min-w-0 flex-1 border-t border-[#8c8c8c]">
        <span className="ml-1 w-px skew-x-[25deg] bg-[#666]" />
        <button type="button" role="tab" aria-selected="true" className="border-b border-[#666] bg-white px-1 leading-[13px] font-bold text-black">
          EZ Water Adjustment
        </button>
        <span className="w-px -skew-x-[25deg] bg-[#666]" />
        <button type="button" role="tab" aria-selected="false" className="border-b border-[#666] px-[6px] leading-[13px]">
          Raw Text Format
        </button>
        <span className="w-px -skew-x-[25deg] bg-[#666]" />
        <button type="button" role="tab" aria-selected="false" className="border-b border-[#666] px-[6px] leading-[13px]">
          Version information
        </button>
        <span className="w-px -skew-x-[25deg] bg-[#666]" />
      </div>
      <div className="flex w-[60%] items-center">
        <span className="h-full w-1 border-x border-[#8c8c8c] bg-white" />
        <button type="button" aria-label="Scroll left" className="ml-1 flex w-[15px] rotate-90 justify-center">
          <Chevron />
        </button>
        <div className="flex h-3 flex-1">
          <span className="w-[49%] bg-[#cdcdcd]" />
        </div>
        <button type="button" aria-label="Scroll right" className="flex w-4 -rotate-90 justify-center">
          <Chevron />
        </button>
        <span className="h-[14px] w-[3px] bg-black" />
        <span className="w-[15px]" />
      </div>
    </div>
  );
}

function Sidebar() {
  return (
    <aside className="flex w-8 shrink-0 flex-col items-center border-l border-[#b5b5b5] bg-[#f0f0f0] pt-[11px]">
      <button type="button" aria-label="Sidebar settings" className="mb-3 flex size-3 items-center">
        <svg width="10" height="8" viewBox="0 0 10 8" aria-hidden="true">
          <path d="M0 1h5M0 3h5" stroke="#444" />
          <path d="M3 4h6L6 7.500z" fill="#333" />
        </svg>
      </button>
      <button type="button" aria-label="Properties" className="flex size-[26px] items-center justify-center border border-[#b9b4c0] bg-[#f4f4f4]">
        <svg width="18" height="18" viewBox="0 0 18 18" aria-hidden="true">
          <path d="M1 4l8-3 8 3v9l-8 4-8-4z" fill="#6ed321" />
          <path d="M1 4l8 3v10l-8-4z" fill="#2f9be0" />
          <path d="M1 4l8-3v6z" fill="#5cc3f2" />
          <path d="M9 1l8 3-8 3z" fill="#a8ea3c" />
          <path d="M1 8.500l8 3.500 8-3.500M5 5.500v9.500M13 5.500v9.500" stroke="#eafbe8" fill="none" />
        </svg>
      </button>
      <button type="button" aria-label="Styles" className="flex h-[30px] w-[26px] items-center justify-center">
        <svg width="20" height="20" viewBox="0 0 20 20" aria-hidden="true">
          <path d="M3 19L6 9q4-5 8 0l3 9-5-3-4 1z" fill="#1f5f8f" />
          <path d="M11 11l6 2-1 6-4-3z" fill="#62b53a" />
          <circle cx="5" cy="4" r="2" fill="#d8542b" />
          <circle cx="10" cy="3" r="2" fill="#c06ad8" />
          <circle cx="16" cy="4" r="2" fill="#f0b030" />
          <circle cx="3" cy="9" r="2" fill="#e66ac0" />
          <circle cx="18" cy="10" r="1.500" fill="#e8583c" />
          <circle cx="10" cy="9" r="4" fill="#173b58" />
        </svg>
      </button>
      <button type="button" aria-label="Gallery" className="flex h-[30px] w-[26px] items-center justify-center">
        <svg width="18" height="18" viewBox="0 0 18 18" aria-hidden="true">
          <path d="M1 4l11-3 5 11-11 4z" fill="#f6fbf2" stroke="#9ab0a0" />
          <path d="M3 6l9-2 3 7-8 2z" fill="#8fcaf0" />
          <path d="M5 10l4-2 3 3 3-1-1 2-7 2z" fill="#62ae3a" />
          <path d="M5 9l6 1-3 3z" fill="#286a9c" />
        </svg>
      </button>
      <button type="button" aria-label="Navigator" className="flex h-7 w-[26px] items-center justify-center">
        <svg width="20" height="20" viewBox="0 0 20 20" aria-hidden="true">
          <circle cx="10" cy="10" r="8" fill="#fff" stroke="#e2942e" strokeWidth="2.500" />
          <path d="M14 4l-2 8-4-3z" fill="#e0403a" />
          <path d="M6 15l2-6 4 3z" fill="#3f7fd0" />
          <path d="M9 1h2v5H9z" fill="#58a028" />
        </svg>
      </button>
      <button type="button" aria-label="Functions" className="flex h-[30px] w-[26px] items-center justify-center">
        <svg width="20" height="20" viewBox="0 0 20 20" aria-hidden="true">
          <path d="M5 1h10l4 4v14H5z" fill="#d6ecf7" stroke="#4c94bc" />
          <path d="M15 1v4h4" fill="#fff" stroke="#4c94bc" />
          <text x="2" y="15" fontSize="15" fontStyle="italic" fontWeight="700" fill="#28485c" className="font-['Liberation_Serif',serif]">fx</text>
        </svg>
      </button>
    </aside>
  );
}

function StatusBar() {
  return (
    <footer className="flex h-5 shrink-0 items-center bg-[#f0f0f0] text-[11px] text-[#222]">
      <span className="w-[25%] border-r border-[#c0c0c0] pl-[7px]">Sheet 1 / 3</span>
      <span className="w-[30%] pl-[3px]">PageStyle_EZ Water Adjustment</span>
      <span className="w-[46px] border-l border-[#c0c0c0]">&nbsp;</span>
      <span className="w-7 border-x border-[#c0c0c0] text-center">STD</span>
      <span className="w-[14px] border-r border-[#c0c0c0] pl-1">*</span>
      <span className="flex-1 pl-3 text-center">Sum=0</span>
      <div className="flex w-32 items-center gap-1 border-l border-[#c0c0c0] pl-1">
        <button type="button" aria-label="Zoom out" className="flex size-[9px] items-center justify-center rounded-full border border-[#3d7299] bg-[#cfe4f3]">
          <span className="h-px w-1 bg-[#2a5a80]" />
        </button>
        <input
          type="range"
          aria-label="Zoom"
          defaultValue={25}
          className="h-2 w-[92px] appearance-none bg-[linear-gradient(#777,#777)] bg-[length:100%_1px] bg-center bg-no-repeat [&::-webkit-slider-thumb]:size-[7px] [&::-webkit-slider-thumb]:appearance-none [&::-webkit-slider-thumb]:rounded-full [&::-webkit-slider-thumb]:bg-[#4a7da3]"
        />
        <button type="button" aria-label="Zoom in" className="flex size-[9px] items-center justify-center rounded-full border border-[#3d7299] bg-[#cfe4f3] text-[8px] leading-none text-[#2a5a80]">
          +
        </button>
      </div>
      <span className="w-8 border-l border-[#c0c0c0] pl-1 whitespace-nowrap">65 %</span>
    </footer>
  );
}

export default function App() {
  return (
    <div className="flex h-screen flex-col overflow-hidden border-x-2 border-t border-[#dcbfa8] bg-white font-['Lato','Noto_Sans',sans-serif] text-[#222]">
      <TitleBar />
      <MenuBar />
      <Toolbars />
      <div className="flex min-h-0 flex-1">
        <main className="flex min-w-0 flex-1 flex-col">
          <FormulaBar />
          <div className="flex min-h-0 flex-1">
            <Sheet />
            <VerticalScroll />
          </div>
          <TabBar />
        </main>
        <div className="flex w-[6px] shrink-0 items-center justify-center border-l border-[#b5b5b5] bg-[#f0f0f0]">
          <span className="h-7 border-l-2 border-dotted border-[#888]" />
        </div>
        <Sidebar />
      </div>
      <StatusBar />
    </div>
  );
}
